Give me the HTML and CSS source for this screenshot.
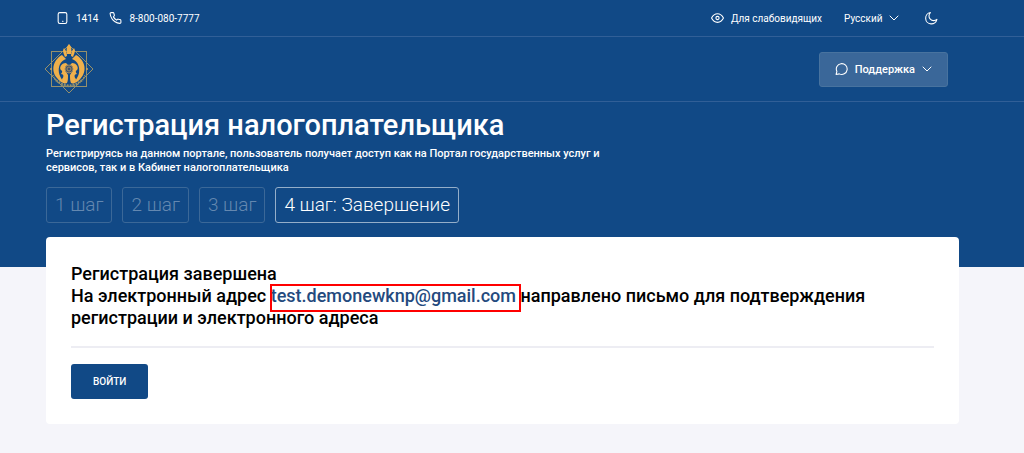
FILE: index.html
```html
<!DOCTYPE html>
<html lang="ru">
<head>
  <meta charset="UTF-8">
  <meta name="viewport" content="width=device-width, initial-scale=1.0">
  <title>Регистрация налогоплательщика</title>
  <link rel="stylesheet" href="styles.css">
</head>
<body>

  <header class="header">
    <div class="topbar">
      <div class="contacts">
        <a class="contact" href="tel:1414">
          <svg class="icon" width="13" height="14" viewBox="0 0 24 24"><rect x="4" y="2" width="16" height="20" rx="3"/><path d="M12 18h1"/></svg>
          1414
        </a>
        <a class="contact" href="tel:88000807777">
          <svg class="icon" width="13" height="14" viewBox="0 0 24 24"><path d="M22 16.900v3a2 2 0 0 1-2.200 2 19.800 19.800 0 0 1-8.600-3.100 19.500 19.500 0 0 1-6-6 19.800 19.800 0 0 1-3.100-8.700A2 2 0 0 1 4.100 2h3a2 2 0 0 1 2 1.700c.1 1 .4 1.900.7 2.800a2 2 0 0 1-.5 2.100L8.100 9.900a16 16 0 0 0 6 6l1.300-1.300a2 2 0 0 1 2.100-.4c.9.300 1.800.6 2.800.7a2 2 0 0 1 1.700 2z"/></svg>
          8-800-080-7777
        </a>
      </div>
      <div class="settings">
        <a class="contact" href="#">
          <svg class="icon" width="13" height="14" viewBox="0 0 24 24"><path d="M1 12s4-8 11-8 11 8 11 8-4 8-11 8S1 12 1 12z"/><circle cx="12" cy="12" r="3"/></svg>
          Для слабовидящих
        </a>
        <div class="language">
          <select class="language-select" aria-label="Язык">
            <option>Русский</option>
            <option>Қазақша</option>
          </select>
          <svg class="icon" width="10" height="6" viewBox="0 0 10 6"><path class="chevron" d="M1 1l4 4 4-4"/></svg>
        </div>
        <button class="theme" type="button" aria-label="Тёмная тема">
          <svg class="icon" width="13" height="14" viewBox="0 0 24 24"><path d="M22 14.500A10.500 10.500 0 1 1 10 2a7.500 7.500 0 0 0 12 12.500z"/></svg>
        </button>
      </div>
    </div>

    <div class="navbar">
      <a class="logo" href="#" aria-label="Главная">
        <svg width="50" height="50" viewBox="0 0 50 50">
          <g class="logo-frame">
            <rect x="7.500" y="7.500" width="35" height="35"/>
            <path d="M25 1l24 24-24 24L1 25z"/>
            <path class="logo-marks" d="M9 31a17 17 0 0 0 32 0"/>
          </g>
          <path class="logo-base" d="M17 12a16 16 0 1 0 16 0L25 8z"/>
          <g class="logo-gold">
            <path d="M18 11c-8 4-12 15-5 23 2 3 5 5 9 6-2-2-6-6-7-11-1-6 1-12 7-14z"/>
            <path d="M32 11c8 4 12 15 5 23-2 3-5 5-9 6 2-2 6-6 7-11 1-6-1-12-7-14z"/>
            <path d="M22 19c-5 0-7 5-5 7 2 1 1 3 0 4 3 0 3 3 1 5 0 3 2 5 5 4 1-2 1-5 1-8l-3-5c0-3 1-4 3-5z"/>
            <path d="M28 19c5 0 7 5 5 7-2 1-1 3 0 4-3 0-3 3-1 5 0 3-2 5-5 4-1-2-1-5-1-8l3-5c0-3-1-4-3-5z"/>
            <path d="M25 0c-2 2-3 5-2 10h4c1-5 0-8-2-10z"/>
            <path d="M20 4c-2 3 0 6 1 9l2-1c0-3-1-6-3-8z"/>
            <path d="M30 4c2 3 0 6-1 9l-2-1c0-3 1-6 3-8z"/>
          </g>
          <path class="logo-marks-low" d="M12 36q13 11 26 0"/>
          <circle class="logo-disc" cx="25" cy="25" r="4"/>
          <circle class="logo-ring" cx="25" cy="25" r="2"/>
          <circle class="logo-dot" cx="7" cy="25" r="1"/>
          <circle class="logo-dot" cx="43" cy="25" r="1"/>
        </svg>
      </a>
      <button class="support" type="button">
        <svg class="icon" width="13" height="14" viewBox="0 0 24 24"><path d="M2 22l1.500-5.500A10 10 0 1 1 8 21z"/></svg>
        Поддержка
        <svg class="icon" width="10" height="6" viewBox="0 0 10 6"><path class="chevron" d="M1 1l4 4 4-4"/></svg>
      </button>
    </div>
  </header>

  <main>
    <section class="hero">
      <h1 class="title">Регистрация налогоплательщика</h1>
      <p class="subtitle">Регистрируясь на данном портале, пользователь получает доступ как на Портал государственных услуг и сервисов, так и в Кабинет налогоплательщика</p>
      <ol class="steps">
        <li class="step">1 шаг</li>
        <li class="step">2 шаг</li>
        <li class="step">3 шаг</li>
        <li class="step active" aria-current="step">4 шаг: Завершение</li>
      </ol>
    </section>

    <section class="card">
      <h2 class="message">Регистрация завершена<br>
        На электронный адрес <a class="email" href="mailto:test.demonewknp@gmail.com">test.demonewknp@gmail.com</a> направлено письмо для подтверждения<br>
        регистрации и электронного адреса</h2>
      <hr class="divider">
      <button class="login" type="button">ВОЙТИ</button>
    </section>
  </main>

</body>
</html>
```

FILE: styles.css
```css
* {
  box-sizing: border-box;
}

body {
  margin: 0;
  background-color: #f5f5fa;
  color: #000;
  font-family: Roboto, sans-serif;
}

a {
  color: inherit;
  text-decoration: none;
}

button,
select {
  font-family: inherit;
  color: inherit;
  border: none;
  background: none;
  padding: 0;
  cursor: pointer;
}

.icon {
  flex: none;
  fill: none;
  stroke: currentColor;
  stroke-width: 2;
  stroke-linecap: round;
  stroke-linejoin: round;
}

.chevron {
  stroke-width: 1;
}

.header {
  background-color: #114986;
  color: #fff;
}

.topbar {
  display: flex;
  justify-content: space-between;
  align-items: center;
  height: 37px;
  padding: 0 86px 0 56px;
  border-bottom: 1px solid #315f97;
  font-size: 10px;
}

.contacts,
.contact,
.settings,
.language {
  display: flex;
  align-items: center;
}

.contacts {
  gap: 11px;
}

.contact {
  gap: 7px;
}

.settings {
  gap: 22px;
}

.language {
  gap: 5px;
}

.language-select {
  appearance: none;
  width: 40px;
  font-size: 10px;
}

.language-select option {
  color: #111;
}

.theme {
  display: flex;
  margin-left: 4px;
}

.navbar {
  display: flex;
  justify-content: space-between;
  align-items: center;
  height: 65px;
  padding: 0 76px 0 44px;
  border-bottom: 1px solid #315f97;
}

.logo {
  display: flex;
}

.logo-frame {
  fill: none;
  stroke: #95906c;
  stroke-width: 1;
}

.logo-marks {
  stroke-width: 2;
  stroke-dasharray: 1 1;
}

.logo-marks-low {
  fill: none;
  stroke: #95906c;
  stroke-width: 2;
  stroke-dasharray: 2 1;
}

.logo-base {
  fill: #114986;
}

.logo-gold {
  fill: #f0b04b;
}

.logo-disc {
  fill: #40516b;
  stroke: #a58c5d;
}

.logo-ring {
  fill: none;
  stroke: #a58c5d;
}

.logo-dot {
  fill: #d0a557;
}

.support {
  display: flex;
  align-items: center;
  gap: 7px;
  height: 35px;
  padding: 0 15px;
  border: 1px solid #48739f;
  border-radius: 3px;
  background-color: #3a6799;
  font-size: 11px;
  font-weight: 500;
}

.hero {
  padding: 7px 65px 44px 46px;
  background-color: #114986;
  color: #fff;
}

.title {
  margin: 0;
  font-size: 29px;
  font-weight: 500;
  line-height: 32px;
}

.subtitle {
  max-width: 600px;
  margin: 6px 0 12px;
  font-size: 11px;
  font-weight: 500;
  line-height: 14px;
}

.steps {
  display: flex;
  gap: 10px;
  margin: 0;
  padding: 0;
  list-style: none;
}

.step {
  height: 36px;
  padding: 0 8px;
  border: 1px solid #3b6898;
  border-radius: 3px;
  color: #6488b0;
  font-size: 19px;
  font-weight: 300;
  line-height: 34px;
}

.step.active {
  border-color: #94aec9;
  color: #fff;
}

.card {
  margin: -30px 65px 29px 46px;
  padding: 26px 25px 25px;
  border-radius: 4px;
  background-color: #fff;
}

.message {
  margin: 0;
  font-size: 18px;
  font-weight: 500;
  line-height: 22px;
}

.email {
  position: relative;
  color: #244a7e;
}

/* frame drawn over the address, a bit wider than the text */
.email::after {
  content: "";
  position: absolute;
  inset: -1px -5px -6px -1px;
  border: 2px solid #f00;
}

.divider {
  height: 2px;
  margin: 17px 0 16px;
  border: none;
  background-color: #ededf3;
}

.login {
  height: 35px;
  padding: 0 22px;
  border-radius: 3px;
  background-color: #114986;
  color: #fff;
  font-size: 10px;
  font-weight: 500;
}
```
